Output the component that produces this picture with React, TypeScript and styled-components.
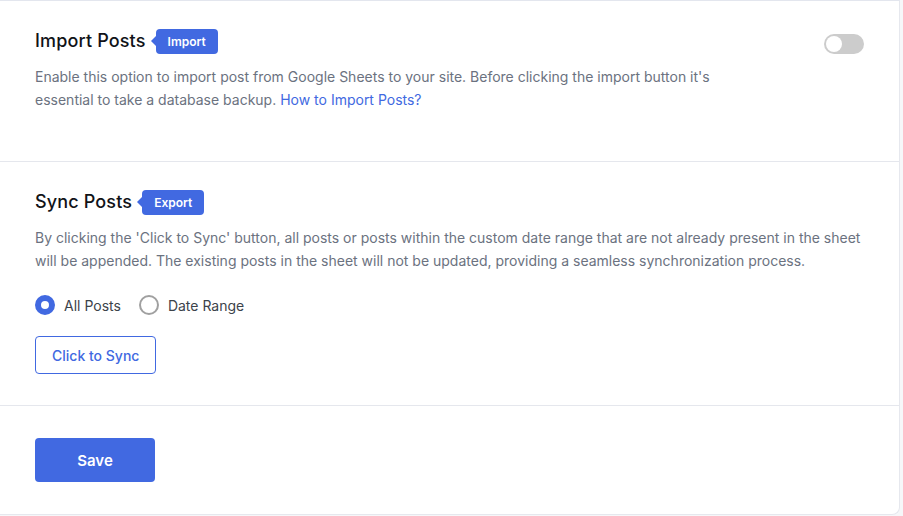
import { useState } from 'react';
import styled, { createGlobalStyle } from 'styled-components';

const GlobalStyle = createGlobalStyle`
    * { box-sizing: border-box; }
    body {
        margin: 0;
        background: #f6f7f9;
        font-family: Inter, "Noto Sans", sans-serif;
    }
`;

const Card = styled.div`
    width: 900px;
    height: 515px;
    background: #fff;
    border-top: 1px solid #e3e6ee;
    border-right: 1px solid #e6e8ee;
    border-bottom: 1px solid #e6e8ee;
    border-radius: 0 0 8px 0;
    display: flex;
    flex-direction: column;
`;

const Section = styled.section<{ $pb: number }>`
    padding: 27px 35px ${(p) => p.$pb}px 35px;
    border-bottom: 1px solid #e5e7ed;
`;

const HeadRow = styled.div`
    display: flex;
    align-items: center;
    justify-content: space-between;
`;

const TitleWrap = styled.div`
    display: flex;
    align-items: center;
    gap: 10px;
`;

const Title = styled.h2`
    margin: 0;
    font-size: 18px;
    line-height: 26px;
    font-weight: 500;
    letter-spacing: 0.15px;
    color: #111318;
`;

const Badge = styled.span`
    position: relative;
    display: inline-flex;
    align-items: center;
    height: 25px;
    padding: 0 12px;
    background: #4169e1;
    color: #fff;
    font-size: 12px;
    font-weight: 600;
    border-radius: 4px;

    &::before {
        content: '';
        position: absolute;
        left: -5px;
        top: 50%;
        transform: translateY(-50%);
        border-top: 5px solid transparent;
        border-bottom: 5px solid transparent;
        border-right: 5px solid #4169e1;
    }
`;

const Desc = styled.p<{ $max?: number }>`
    margin: 11px 0 0;
    font-size: 14px;
    line-height: 23px;
    color: #6b7280;
    max-width: ${(p) => (p.$max ? `${p.$max}px` : 'none')};
`;

const Link = styled.a`
    color: #4169e1;
    text-decoration: none;
`;

const Toggle = styled.button<{ $on: boolean }>`
    position: relative;
    width: 40px;
    height: 20px;
    margin-top: 6px;
    border: none;
    padding: 0;
    border-radius: 10px;
    background: ${(p) => (p.$on ? '#4169e1' : '#cccccc')};
    cursor: pointer;

    &::after {
        content: '';
        position: absolute;
        top: 2px;
        left: ${(p) => (p.$on ? '22px' : '2px')};
        width: 16px;
        height: 16px;
        border-radius: 50%;
        background: #fff;
    }
`;

const RadioGroup = styled.div`
    display: flex;
    align-items: center;
    gap: 18px;
    margin-top: 23px;
`;

const RadioLabel = styled.label`
    display: flex;
    align-items: center;
    gap: 9px;
    font-size: 14px;
    color: #3c434a;
    cursor: pointer;
`;

const RadioDot = styled.span<{ $checked: boolean }>`
    width: 20px;
    height: 20px;
    border-radius: 50%;
    border: ${(p) => (p.$checked ? '6px solid #4169e1' : '2px solid #a0a0a0')};
    background: #fff;
`;

const SyncButton = styled.button`
    margin-top: 21px;
    height: 38px;
    padding: 0 16px;
    background: #fff;
    border: 1px solid #4169e1;
    border-radius: 4px;
    color: #4169e1;
    font-family: inherit;
    font-size: 14px;
    font-weight: 500;
    cursor: pointer;
`;

const Footer = styled.div`
    padding: 32px 35px;
`;

const SaveButton = styled.button`
    width: 120px;
    height: 44px;
    background: #4169e1;
    border: none;
    border-radius: 4px;
    color: #fff;
    font-family: inherit;
    font-size: 15px;
    font-weight: 600;
    cursor: pointer;
`;

const App = () => {
    const [importOn, setImportOn] = useState(false);
    const [range, setRange] = useState<'all' | 'date'>('all');

    return (
        <>
            <GlobalStyle />
            <Card>
                <Section $pb={50}>
                    <HeadRow>
                        <TitleWrap>
                            <Title>Import Posts</Title>
                            <Badge>Import</Badge>
                        </TitleWrap>
                        <Toggle $on={importOn} onClick={() => setImportOn(!importOn)} aria-label="Import posts" />
                    </HeadRow>
                    <Desc $max={690}>
                        Enable this option to import post from Google Sheets to your site. Before clicking the import button it's
                        essential to take a database backup. <Link href="#">How to Import Posts?</Link>
                    </Desc>
                </Section>
                <Section $pb={31}>
                    <TitleWrap>
                        <Title>Sync Posts</Title>
                        <Badge>Export</Badge>
                    </TitleWrap>
                    <Desc>
                        By clicking the 'Click to Sync' button, all posts or posts within the custom date range that are not
                        already present in the sheet will be appended. The existing posts in the sheet will not be updated,
                        providing a seamless synchronization process.
                    </Desc>
                    <RadioGroup>
                        <RadioLabel onClick={() => setRange('all')}>
                            <RadioDot $checked={range === 'all'} />
                            All Posts
                        </RadioLabel>
                        <RadioLabel onClick={() => setRange('date')}>
                            <RadioDot $checked={range === 'date'} />
                            Date Range
                        </RadioLabel>
                    </RadioGroup>
                    <SyncButton>Click to Sync</SyncButton>
                </Section>
                <Footer>
                    <SaveButton>Save</SaveButton>
                </Footer>
            </Card>
        </>
    );
};

export default App;
